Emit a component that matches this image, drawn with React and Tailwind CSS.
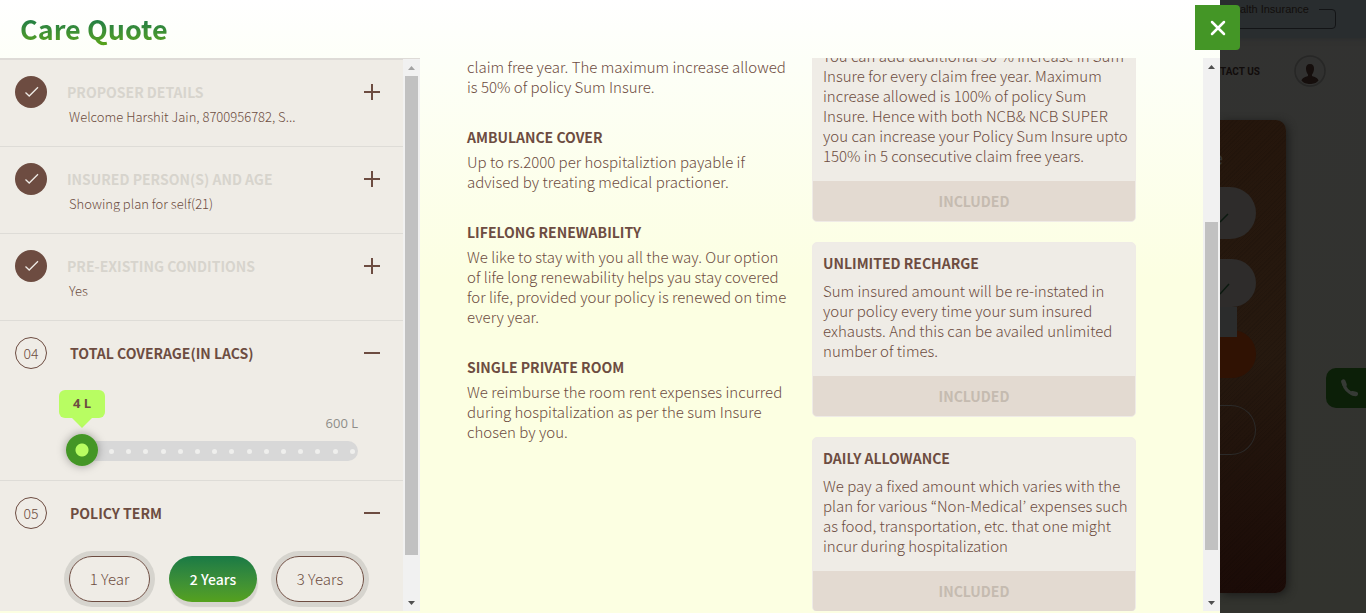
const STEPS = [
  { title: "PROPOSER DETAILS", summary: "Welcome Harshit Jain, 8700956782, S..." },
  { title: "INSURED PERSON(S) AND AGE", summary: "Showing plan for self(21)" },
  { title: "PRE-EXISTING CONDITIONS", summary: "Yes" },
];

const BENEFITS = [
  { text: "claim free year. The maximum increase allowed is 50% of policy Sum Insure." },
  {
    title: "AMBULANCE COVER",
    text: "Up to rs.2000 per hospitaliztion payable if advised by treating medical practioner.",
  },
  {
    title: "LIFELONG RENEWABILITY",
    text: "We like to stay with you all the way. Our option of life long renewability helps yau stay covered for life, provided your policy is renewed on time every year.",
  },
  {
    title: "SINGLE PRIVATE ROOM",
    text: "We reimburse the room rent expenses incurred during hospitalization as per the sum Insure chosen by you.",
  },
];

const ADDONS = [
  {
    text: "You can add additional 50 % increase in Sum Insure for every claim free year. Maximum increase allowed is 100% of policy Sum Insure. Hence with both NCB& NCB SUPER you can increase your Policy Sum Insure upto 150% in 5 consecutive claim free years.",
  },
  {
    title: "UNLIMITED RECHARGE",
    text: "Sum insured amount will be re-instated in your policy every time your sum insured exhausts. And this can be availed unlimited number of times.",
  },
  {
    title: "DAILY ALLOWANCE",
    text: "We pay a fixed amount which varies with the plan for various “Non-Medical’ expenses such as food, transportation, etc. that one might incur during hospitalization",
  },
];

function Scrollbar({ top, size, dimTop }) {
  return (
    <div className="flex w-[17px] shrink-0 flex-col items-center bg-[#f1f1f1]" aria-hidden="true">
      <svg className="h-[17px] w-[17px] shrink-0" viewBox="0 0 17 17">
        <path d="M5 11h7L8.500 7z" fill={dimTop ? "#a3a3a3" : "#505050"} />
      </svg>
      <div className="flex w-[13px] flex-1 flex-col">
        <div style={{ flexGrow: top }} />
        <div className="bg-[#c1c1c1]" style={{ flexGrow: size }} />
        <div style={{ flexGrow: 100 - top - size }} />
      </div>
      <svg className="h-[17px] w-[17px] shrink-0" viewBox="0 0 17 17">
        <path d="M5 7h7l-3.500 4z" fill="#505050" />
      </svg>
    </div>
  );
}

function Toggle({ open, label }) {
  return (
    <button type="button" aria-label={label} className="flex h-8 w-4 shrink-0 items-center text-[#6d4c41]">
      <svg className="h-4 w-4" viewBox="0 0 16 16" fill="currentColor">
        <path d="M0 7h16v2H0z" />
        {!open && <path d="M7 0h2v16H7z" />}
      </svg>
    </button>
  );
}

function DoneStep({ title, summary }) {
  return (
    <section className="flex h-[87px] border-b border-[#dedcd7] pt-4 pr-[23px] pl-[15px]">
      <span className="flex h-8 w-8 shrink-0 items-center justify-center rounded-full bg-[#6d4c41]">
        <svg className="h-8 w-8" viewBox="0 0 32 32" fill="none" stroke="#efebe6" strokeWidth="1.300">
          <path d="M10.500 16.500l3.700 3.500L23 11.300" />
        </svg>
      </span>
      <div className="ml-5 min-w-0 flex-1">
        <h2 className="text-[14px] leading-8 font-bold text-[#d7d4cd]">{title}</h2>
        <p className="ml-0.5 text-[13px] leading-[18px] font-light text-[#6d4c41]">{summary}</p>
      </div>
      <Toggle label={"Expand " + title} />
    </section>
  );
}

function OpenStep({ number, title, children }) {
  return (
    <section className="border-b border-[#dedcd7] pt-4 pr-[23px] pl-[15px]">
      <div className="flex items-center">
        <span className="flex h-8 w-8 shrink-0 items-center justify-center rounded-full border border-[#6d4c41] text-[14px] font-light text-[#6d4c41]">
          {number}
        </span>
        <h2 className="ml-[23px] flex-1 text-[14px] leading-8 font-bold text-[#6d4c41]">{title}</h2>
        <Toggle open label={"Collapse " + title} />
      </div>
      {children}
    </section>
  );
}

function CoverageSlider() {
  return (
    <div className="mt-[21px] mr-[22px] ml-[51px] pb-[14px]">
      <div className="flex h-11 items-start justify-between font-['Open_Sans',sans-serif] text-[13px]">
        <output
          htmlFor="coverage"
          className="relative -ml-[7px] flex h-7 w-[46px] items-center justify-center rounded-md bg-[#b8fd62] font-bold text-[#6d4c41]"
        >
          4 L
          <svg className="absolute top-7 left-[13px] h-[10px] w-5" viewBox="0 0 20 10">
            <path d="M0 0h20L10 10z" fill="#b8fd62" />
          </svg>
        </output>
        <span className="mt-[23px] leading-5 text-[#8e8c88]">600 L</span>
      </div>
      <div className="relative flex h-8 items-end pb-[5px]">
        <div className="flex h-5 w-full items-center justify-between rounded-full bg-[#d8d8d8] pr-[3px] pl-[43px]">
          {Array.from({ length: 15 }, (_, i) => (
            <span key={i} className="h-[5px] w-[5px] rounded-full bg-[#efefed]" />
          ))}
        </div>
        <input
          id="coverage"
          type="range"
          min="4"
          max="600"
          defaultValue="4"
          aria-label="Total coverage in lacs"
          className="absolute inset-0 h-8 w-full appearance-none bg-transparent [&::-webkit-slider-thumb]:h-8 [&::-webkit-slider-thumb]:w-8 [&::-webkit-slider-thumb]:appearance-none [&::-webkit-slider-thumb]:rounded-full [&::-webkit-slider-thumb]:bg-[radial-gradient(circle,#b8fd62_6px,#449626_7px)] [&::-webkit-slider-thumb]:shadow-[0_0_10px_rgba(0,0,0,0.35)]"
        />
      </div>
    </div>
  );
}

function PolicyTerm() {
  const idle = "border border-[#6d4c41] text-[15px] font-light text-[#6d4c41] shadow-[0_0_0_5px_#d6d4ce]";
  const active =
    "bg-linear-to-b from-[#187a45] to-[#55a11c] text-[14px] font-medium text-white shadow-[1px_5px_1px_#d6d4ce]";
  return (
    <div className="mt-[27px] ml-[54px] flex gap-[19px] pb-4">
      <button type="button" className={"h-[46px] w-[81px] rounded-full " + idle}>1 Year</button>
      <button type="button" aria-pressed="true" className={"h-[46px] w-[88px] rounded-full " + active}>2 Years</button>
      <button type="button" className={"h-[46px] w-[88px] rounded-full " + idle}>3 Years</button>
    </div>
  );
}

function AddonCard({ title, text }) {
  return (
    <article className="overflow-hidden rounded-[5px] border border-[#efebe6] bg-[#efece6]">
      <div className={title ? "pt-[10px] pr-1 pb-[15px] pl-[10px]" : "pt-[7px] pr-1 pb-[15px] pl-[10px]"}>
        {title && <h3 className="mb-2 text-[14px] leading-5 font-bold">{title}</h3>}
        <p>{text}</p>
      </div>
      <p className="bg-[#e3dad1] text-center text-[14px] leading-10 font-bold text-[#c5bbb0]">INCLUDED</p>
    </article>
  );
}

function DimmedPage() {
  return (
    <aside
      className="relative w-[146px] shrink-0 overflow-hidden bg-linear-to-b from-[#323231] to-[#32332e] font-['Liberation_Sans',sans-serif]"
      aria-hidden="true"
    >
      <div className="h-[38px] bg-[#292d2f] shadow-[0_2px_4px_#2c2e2f]">
        <div className="absolute top-[9px] -left-10 h-5 w-[156px] rounded-[4px] border border-[#131416]" />
        <span className="absolute top-px right-[47px] bg-[#292d2f] pr-[10px] text-[11px] leading-4 text-[#120d0c]">
          alth Insurance
        </span>
      </div>
      <div className="flex h-[82px] items-start justify-between pt-[17px] pr-10">
        <span className="mt-[9px] font-['Roboto',sans-serif] text-[10px] leading-4 font-bold text-[#110c0b]">
          TACT US
        </span>
        <svg className="h-8 w-8" viewBox="0 0 32 32">
          <circle cx="16" cy="16" r="15" fill="#313130" stroke="#272726" strokeWidth="1.500" />
          <path
            d="M16 9c3 0 4.200 2 4 5-.2 2.500-1 4.500-2 5.500v1.500c3 1 6 2 6.500 4.500C23 28 19 29 16 29s-7-1-8.500-3.500C8 23 11 22 14 21v-1.500c-1-1-1.800-3-2-5.500-.2-3 1-5 4-5z"
            fill="#150e0c"
          />
        </svg>
      </div>
      <div className="relative h-[473px] w-[66px] overflow-hidden rounded-r-[10px] bg-[repeating-linear-gradient(135deg,rgba(0,0,0,0.08)_0_1px,transparent_1px_3px),linear-gradient(#25160c,#26190f_50%,#1b0b07)] shadow-[2px_2px_8px_#1c1c1a]">
        <span className="absolute top-[26px] -left-[7px] text-[18px] text-[#333332]">e</span>
        <div className="mt-[67px] h-[52px] w-9 rounded-r-full bg-[#2e2c2b]" />
        <div className="mt-5 h-12 w-9 rounded-r-full bg-[#2e2c2b]" />
        <div className="relative z-10 h-[30px] w-[17px] bg-[#2b2c2c]" />
        <div className="-mt-[7px] h-12 w-9 rounded-r-full bg-[#301203]" />
        <div className="mt-[27px] h-[50px] w-9 rounded-r-full border border-l-0 border-[#2b2a29]" />
        <svg className="absolute top-[90px] left-0 h-[90px] w-[10px]" viewBox="0 0 10 90" stroke="#0c1a10" strokeWidth="1.500">
          <path d="M0 12l8-8M0 84l9-10" />
        </svg>
      </div>
      <div className="absolute top-[368px] right-0 flex h-10 w-10 items-center rounded-l-[10px] bg-[#0c1f08] pl-[14px]">
        <svg className="h-[18px] w-[18px] shrink-0" viewBox="0 0 24 24" fill="none" stroke="#363a35" strokeLinecap="round">
          <path d="M5 6C6 12 11 18 18 20" strokeWidth="4.500" />
          <path d="M4.500 3.500l1.500 4M16.500 19l4.500 1" strokeWidth="6" />
        </svg>
      </div>
    </aside>
  );
}

export default function App() {
  return (
    <div className="flex h-screen overflow-hidden bg-[#32332e] font-['Noto_Sans_CJK_KR',sans-serif]">
      <main className="relative z-10 flex min-w-0 flex-1 flex-col bg-[linear-gradient(#ffffff,#fdfff8_60px,#fcffe2_280px)] pb-0.5">
        <header className="flex h-[58px] shrink-0 items-center pl-5">
          <h1 className="bg-linear-to-b from-[#187a45] from-20% to-[#55a11c] to-85% bg-clip-text text-[27px] leading-10 font-bold text-transparent">
            Care Quote
          </h1>
        </header>
        <button
          type="button"
          aria-label="Close"
          className="absolute top-[5px] -right-5 flex h-[45px] w-[45px] items-center justify-center rounded-r-[4px] bg-[#449626]"
        >
          <svg className="h-4 w-4" viewBox="0 0 16 16" stroke="#fff" strokeWidth="2.500" strokeLinecap="round">
            <path d="M2 2l12 12M14 2L2 14" />
          </svg>
        </button>
        <div className="flex min-h-0 flex-1">
          <div className="flex w-[420px] shrink-0 border-t border-[#dedbd7]">
            <div className="min-w-0 flex-1 overflow-hidden border-t border-[#dedbd7] bg-[#efece6]">
              {STEPS.map((step) => (
                <DoneStep key={step.title} {...step} />
              ))}
              <OpenStep number="04" title="TOTAL COVERAGE(IN LACS)">
                <CoverageSlider />
              </OpenStep>
              <OpenStep number="05" title="POLICY TERM">
                <PolicyTerm />
              </OpenStep>
            </div>
            <Scrollbar top={0} size={92.500} dimTop />
          </div>
          <div className="min-w-0 flex-1 overflow-hidden pr-[67px] pl-[47px]">
            <div className="-mt-5 grid grid-cols-2 items-start gap-[21px] text-[15px] leading-5 font-light text-[#6d4c41]">
              <div className="flex flex-col gap-[30px] pt-[19px]">
                {BENEFITS.map((b) => (
                  <section key={b.text}>
                    {b.title && <h3 className="mb-[5px] text-[14px] leading-5 font-bold">{b.title}</h3>}
                    <p>{b.text}</p>
                  </section>
                ))}
              </div>
              <div className="flex flex-col gap-5">
                {ADDONS.map((a) => (
                  <AddonCard key={a.text} {...a} />
                ))}
              </div>
            </div>
          </div>
          <Scrollbar top={28.400} size={63.200} />
        </div>
      </main>
      <DimmedPage />
    </div>
  );
}
